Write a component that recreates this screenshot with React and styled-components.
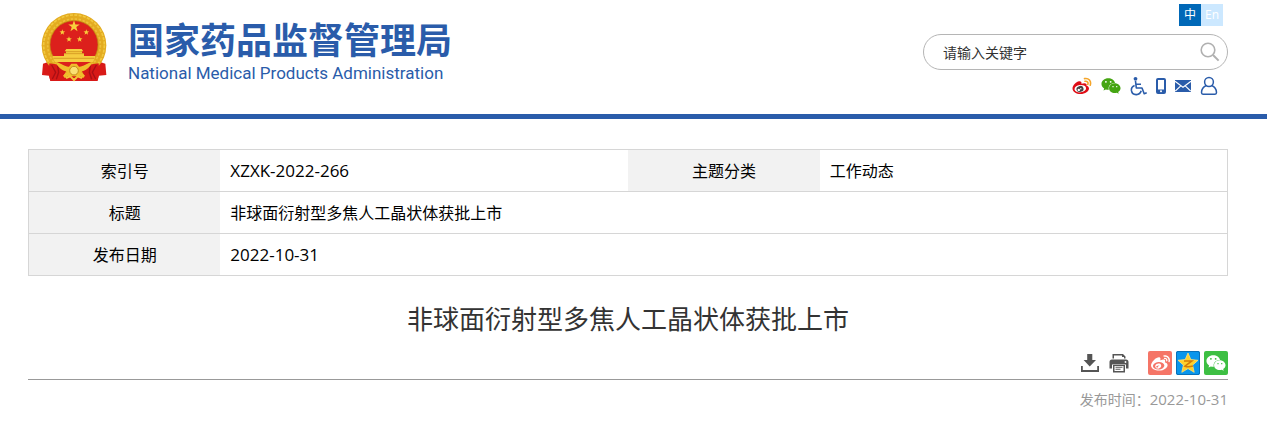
import React from "react";
import styled, { createGlobalStyle } from "styled-components";
import { FaWeibo, FaWeixin } from "react-icons/fa";

const GlobalStyle = createGlobalStyle`
  body {
    margin: 0;
    padding-right: 11px;
    background: #fff;
    color: #000;
    font-family: "Open Sans", "Noto Sans CJK SC", sans-serif;
    font-size: 16px;
  }
  * {
    box-sizing: border-box;
  }
  a {
    color: inherit;
    text-decoration: none;
  }
  svg {
    display: block;
  }
`;

const Wrap = styled.div`
  max-width: 1200px;
  margin: 0 auto;
`;

const Header = styled.header`
  margin-right: -11px;
  padding-right: 11px;
  border-bottom: 5px solid #2a5caa;
`;

const HeaderRow = styled(Wrap)`
  display: flex;
  justify-content: space-between;
  min-height: 114px;
`;

const Logo = styled.a`
  display: flex;
  align-items: flex-start;
  gap: 20px;
  padding: 12px 0 0 13px;
  color: #2a5caa;
`;

const LogoText = styled.div`
  padding-top: 4px;
  white-space: nowrap;
`;

const LogoName = styled.div`
  font-family: "Noto Sans CJK SC", sans-serif;
  font-size: 36px;
  font-weight: 700;
  line-height: 44px;
`;

const LogoSub = styled.div`
  font-family: Roboto, sans-serif;
  font-size: 17px;
  line-height: 26px;
`;

const Tools = styled.div`
  display: flex;
  flex-direction: column;
  width: 305px;
  padding-top: 4px;
`;

const Languages = styled.nav`
  display: flex;
  justify-content: flex-end;
  padding-right: 5px;
`;

const Language = styled.a`
  width: 22px;
  height: 22px;
  background: ${props => (props.$active ? "#0068b7" : "#cce8ff")};
  color: #fff;
  font-size: 12px;
  line-height: 22px;
  text-align: center;
`;

const Search = styled.form`
  display: flex;
  align-items: center;
  height: 36px;
  margin-top: 8px;
  padding: 0 7px 0 19px;
  border: 1px solid #b5b5b5;
  border-radius: 18px;
`;

const SearchInput = styled.input`
  flex: 1;
  min-width: 0;
  padding: 0;
  border: 0;
  outline: 0;
  background: none;
  font-family: inherit;
  font-size: 14px;

  &::placeholder {
    color: #333;
    opacity: 1;
  }
`;

const IconButton = styled.button`
  padding: 0;
  border: 0;
  background: none;
  cursor: pointer;
`;

const QuickLinks = styled.nav`
  display: flex;
  align-items: center;
  justify-content: flex-end;
  gap: 9px;
  height: 20px;
  margin-top: 6px;
  padding-right: 10px;
`;

const Main = styled.main`
  padding-top: 30px;
`;

const InfoTable = styled.table`
  width: 100%;
  border: 1px solid #d6d6d6;
  border-collapse: collapse;
  table-layout: fixed;

  tr {
    height: 42px;
    border-bottom: 1px solid #d6d6d6;
  }
`;

const Label = styled.th`
  padding: 0;
  background: #f2f2f2;
  font-weight: 400;
  line-height: 24px;
  text-align: center;
`;

const Value = styled.td`
  padding: 0 10px;
  font-size: ${props => (props.$latin ? "17px" : "16px")};
  line-height: 24px;
`;

const Title = styled.h1`
  margin: 24px 0 0;
  color: #333;
  font-size: 26px;
  font-weight: 400;
  line-height: 39px;
  text-align: center;
`;

const ShareBar = styled.div`
  display: flex;
  align-items: center;
  justify-content: flex-end;
  gap: 9px;
  margin-top: 12px;
  padding-bottom: 4px;
  border-bottom: 1px solid #999;
`;

const ShareList = styled.div`
  display: flex;
  gap: 4px;
  margin-left: 10px;
`;

const Share = styled.a`
  display: flex;
  align-items: center;
  justify-content: center;
  width: 24px;
  height: 24px;
  border-radius: 2px;
  background: ${props => props.$color};
  color: #fff;
`;

const Published = styled.p`
  margin: 8px 0 0;
  color: #999;
  font-size: 14px;
  line-height: 22px;
  text-align: right;

  time {
    font-size: 15px;
  }
`;

const star = (cx, cy, r) => {
  const points = [];
  for (let i = 0; i < 10; i++) {
    const len = i % 2 ? r * 0.4 : r;
    const angle = (Math.PI / 5) * i - Math.PI / 2;
    points.push(`${cx + len * Math.cos(angle)},${cy + len * Math.sin(angle)}`);
  }
  return points.join(" ");
};

const Emblem = () => (
  <svg width="67" height="70" viewBox="32 37 201 210" aria-hidden="true">
    <path d="M62 184L38 192 35 226 56 228 60 244 201 244 205 228 228 226 225 192 200 184Z" fill="#d91a18" />
    <circle cx="131" cy="137" r="97" fill="#e3ab20" />
    <circle cx="131" cy="137" r="91" fill="none" stroke="#f2c93f" strokeWidth="5" strokeDasharray="9 4" />
    <circle cx="131" cy="137" r="79" fill="none" stroke="#eec03a" strokeWidth="5" strokeDasharray="7 5" />
    <circle cx="131" cy="135" r="72" fill="#dc201c" stroke="#b98310" strokeWidth="2" />
    <polygon points={star(131, 80, 18)} fill="#f8cf3c" />
    <polygon points={star(96, 98, 9)} fill="#f8cf3c" />
    <polygon points={star(168, 98, 9)} fill="#f8cf3c" />
    <polygon points={star(116, 119, 9)} fill="#f8cf3c" />
    <polygon points={star(148, 119, 9)} fill="#f8cf3c" />
    <path d="M108 148H154L159 155H155V161H161V169H194V174L188 187H74L67 174V169H101V161H107V155H103Z" fill="#f6cc40" />
    <path d="M107 156H155M101 162H161M69 176H192" stroke="#c98a18" strokeWidth="2" />
    <path d="M57 191L92 196 108 213 92 243H60L55 222ZM205 191L170 196 154 213 170 243H202L207 222Z" fill="#d71917" />
    <path d="M64 196L76 218 66 238M82 199L85 218 78 239M198 196L186 218 196 238M180 199L177 218 184 239" fill="none" stroke="#a90f14" strokeWidth="4" />
    <path d="M76 188C94 191 103 202 116 201L123 192H139L146 201C159 202 168 191 186 188C177 207 164 214 151 216L164 228 158 236 143 232 137 240H125L119 232 104 236 98 228 111 216C98 214 85 207 76 188Z" fill="#f0bd2c" />
    <circle cx="131" cy="213" r="13" fill="#fae071" stroke="#c58b1b" strokeWidth="3" />
    <path d="M92 243L112 230H150L170 243Z" fill="#d91a18" />
    <path d="M107 235L120 230 131 241 142 230 155 235" fill="none" stroke="#f3c638" strokeWidth="6" />
  </svg>
);

const SearchIcon = () => (
  <svg width="20" height="20" viewBox="0 0 20 20" fill="none" stroke="#b0b0b0">
    <circle cx="8" cy="8" r="6.8" strokeWidth="1.6" />
    <path d="M13 13L18.6 18.6" strokeWidth="2" />
  </svg>
);

const WeiboColor = () => (
  <svg width="20" height="18" viewBox="0 0 20 18" fill="none">
    <path d="M7.2 4.2C3.8 4.7 0.5 8.5 0.5 11.4C0.5 14.8 4.4 17 8.5 17C13.2 17 17 14.4 17 11.5C17 9.8 15.6 9 14.5 8.7C15.2 6.8 13.8 5.3 9.4 6.7C9.9 4.9 8.9 4 7.2 4.2Z" fill="#df0d16" />
    <ellipse cx="8.3" cy="11.7" rx="5.8" ry="3.7" transform="rotate(-7 8.3 11.7)" fill="#fff" />
    <ellipse cx="8" cy="12" rx="3.6" ry="3" transform="rotate(-18 8 12)" fill="#444" />
    <circle cx="6.8" cy="13" r="1.2" fill="#fff" />
    <circle cx="8.8" cy="11.7" r="0.7" fill="#fff" />
    <path d="M12.5 1.6C16.7 0.7 19.6 4.2 18.2 8.2M13 4.3C15.4 3.9 16.5 5.5 15.8 7.5" stroke="#f5a52a" strokeWidth="1.6" strokeLinecap="round" />
  </svg>
);

const WheelchairIcon = () => (
  <svg width="17" height="20" viewBox="0 0 17 20" fill="none" stroke="#2a5caa" strokeWidth="1.6">
    <circle cx="5.5" cy="2.8" r="1.9" fill="#2a5caa" stroke="none" />
    <path d="M5.5 5L6.3 12H12L14.2 17.7L16.7 16.7M6 8.3H11" strokeLinejoin="round" />
    <path d="M4.6 9.5C2.3 10.4 1.2 12.2 1.4 14.4C1.8 17.1 3.9 18.7 6.4 18.6C8.8 18.5 10.6 17.1 11.2 14.8" />
  </svg>
);

const PhoneIcon = () => (
  <svg width="10" height="18" viewBox="0 0 10 18">
    <rect x="1" y="2" width="8" height="14" rx="1" fill="#fff" stroke="#2a5caa" strokeWidth="2" />
    <path d="M1 14H9" stroke="#2a5caa" strokeWidth="3" />
    <circle cx="5" cy="14.2" r="1" fill="#fff" />
  </svg>
);

const MailIcon = () => (
  <svg width="16" height="12" viewBox="0 0 16 12">
    <rect width="16" height="12" fill="#2a5caa" />
    <path d="M0 1.2L8 7.3L16 1.2M0.3 11L5.8 5.8M15.7 11L10.2 5.8" fill="none" stroke="#fff" strokeWidth="1.1" />
  </svg>
);

const UserIcon = () => (
  <svg width="18" height="20" viewBox="0 0 18 20" fill="none" stroke="#2a5caa" strokeWidth="1.5">
    <circle cx="9" cy="6" r="4.4" />
    <path d="M6.4 9.5C3 10.8 1.6 13.2 1.5 16.5C1.5 17.7 2 18.2 3 18.2H15C16 18.2 16.5 17.7 16.5 16.5C16.4 13.2 15 10.8 11.6 9.5" />
  </svg>
);

const DownloadIcon = () => (
  <svg width="20" height="20" viewBox="0 0 20 20" fill="#555">
    <path d="M7.2 1H12.3V7H16L9.7 13.5L3.6 7H7.2Z" />
    <path d="M1 13V19H19V13H17.2V17H2.8V13Z" />
  </svg>
);

const PrintIcon = () => (
  <svg width="20" height="20" viewBox="0 0 20 20" fill="#555">
    <path d="M3.5 1H14L16.5 3.5V5.5H3.5ZM5 2.5V5.5H15V4H13V2.5Z" fillRule="evenodd" />
    <path d="M3 6.5H17C18.6 6.5 19.5 7.5 19.5 9V15.5H17V11.5H3V15.5H0.5V9C0.5 7.5 1.4 6.5 3 6.5Z" />
    <path d="M4 12H16V19.5H4ZM5.5 13V18H14.5V13Z" fillRule="evenodd" />
    <path d="M6.5 13.8H13.5V14.8H6.5ZM6.5 15.8H11.5V16.8H6.5Z" />
    <circle cx="16.5" cy="9" r="0.9" fill="#fff" />
  </svg>
);

const QzoneIcon = () => (
  <svg width="24" height="24" viewBox="0 0 24 24">
    <rect x="0.5" y="0.5" width="23" height="23" rx="1.5" fill="#0995ec" stroke="#0870b8" />
    <path d="M12 2L14.8 8.6L22 9.3L16.6 14.1L18.2 21.3L12 17.6L5.8 21.3L7.4 14.1L2 9.3L9.2 8.6Z" fill="#ffd12b" stroke="#ffe07a" strokeWidth="0.8" strokeLinejoin="round" />
    <path d="M8 10H15.8L9 15.2C11.3 16 14 15.8 17 14.9" fill="none" stroke="#d47b08" strokeWidth="1.6" />
  </svg>
);

const TITLE = "非球面衍射型多焦人工晶状体获批上市";

const App = () => (
  <>
    <GlobalStyle />
    <Header>
      <HeaderRow>
        <Logo href="#">
          <Emblem />
          <LogoText>
            <LogoName>国家药品监督管理局</LogoName>
            <LogoSub>National Medical Products Administration</LogoSub>
          </LogoText>
        </Logo>
        <Tools>
          <Languages>
            <Language href="#" $active>中</Language>
            <Language href="#">En</Language>
          </Languages>
          <Search onSubmit={e => e.preventDefault()}>
            <SearchInput type="text" placeholder="请输入关键字" aria-label="请输入关键字" />
            <IconButton type="submit" aria-label="搜索">
              <SearchIcon />
            </IconButton>
          </Search>
          <QuickLinks>
            <a href="#" aria-label="微博"><WeiboColor /></a>
            <a href="#" aria-label="微信"><FaWeixin size={20} color="#45a512" /></a>
            <a href="#" aria-label="无障碍"><WheelchairIcon /></a>
            <a href="#" aria-label="手机版"><PhoneIcon /></a>
            <a href="#" aria-label="邮箱"><MailIcon /></a>
            <a href="#" aria-label="个人中心"><UserIcon /></a>
          </QuickLinks>
        </Tools>
      </HeaderRow>
    </Header>
    <Main>
      <Wrap>
        <InfoTable>
          <colgroup>
            <col width="16%" />
            <col width="34%" />
            <col width="16%" />
            <col width="34%" />
          </colgroup>
          <tbody>
            <tr>
              <Label scope="row">索引号</Label>
              <Value $latin>XZXK-2022-266</Value>
              <Label scope="row">主题分类</Label>
              <Value>工作动态</Value>
            </tr>
            <tr>
              <Label scope="row">标题</Label>
              <Value colSpan={3}>{TITLE}</Value>
            </tr>
            <tr>
              <Label scope="row">发布日期</Label>
              <Value colSpan={3} $latin>2022-10-31</Value>
            </tr>
          </tbody>
        </InfoTable>
        <Title>{TITLE}</Title>
        <ShareBar>
          <IconButton type="button" aria-label="下载"><DownloadIcon /></IconButton>
          <IconButton type="button" aria-label="打印"><PrintIcon /></IconButton>
          <ShareList>
            <Share href="#" $color="#f57567" aria-label="分享到微博"><FaWeibo size={19} /></Share>
            <Share href="#" $color="#0995ec" aria-label="分享到QQ空间"><QzoneIcon /></Share>
            <Share href="#" $color="#3dbf43" aria-label="分享到微信"><FaWeixin size={20} /></Share>
          </ShareList>
        </ShareBar>
        <Published>
          发布时间：<time dateTime="2022-10-31">2022-10-31</time>
        </Published>
      </Wrap>
    </Main>
  </>
);

export default App;
